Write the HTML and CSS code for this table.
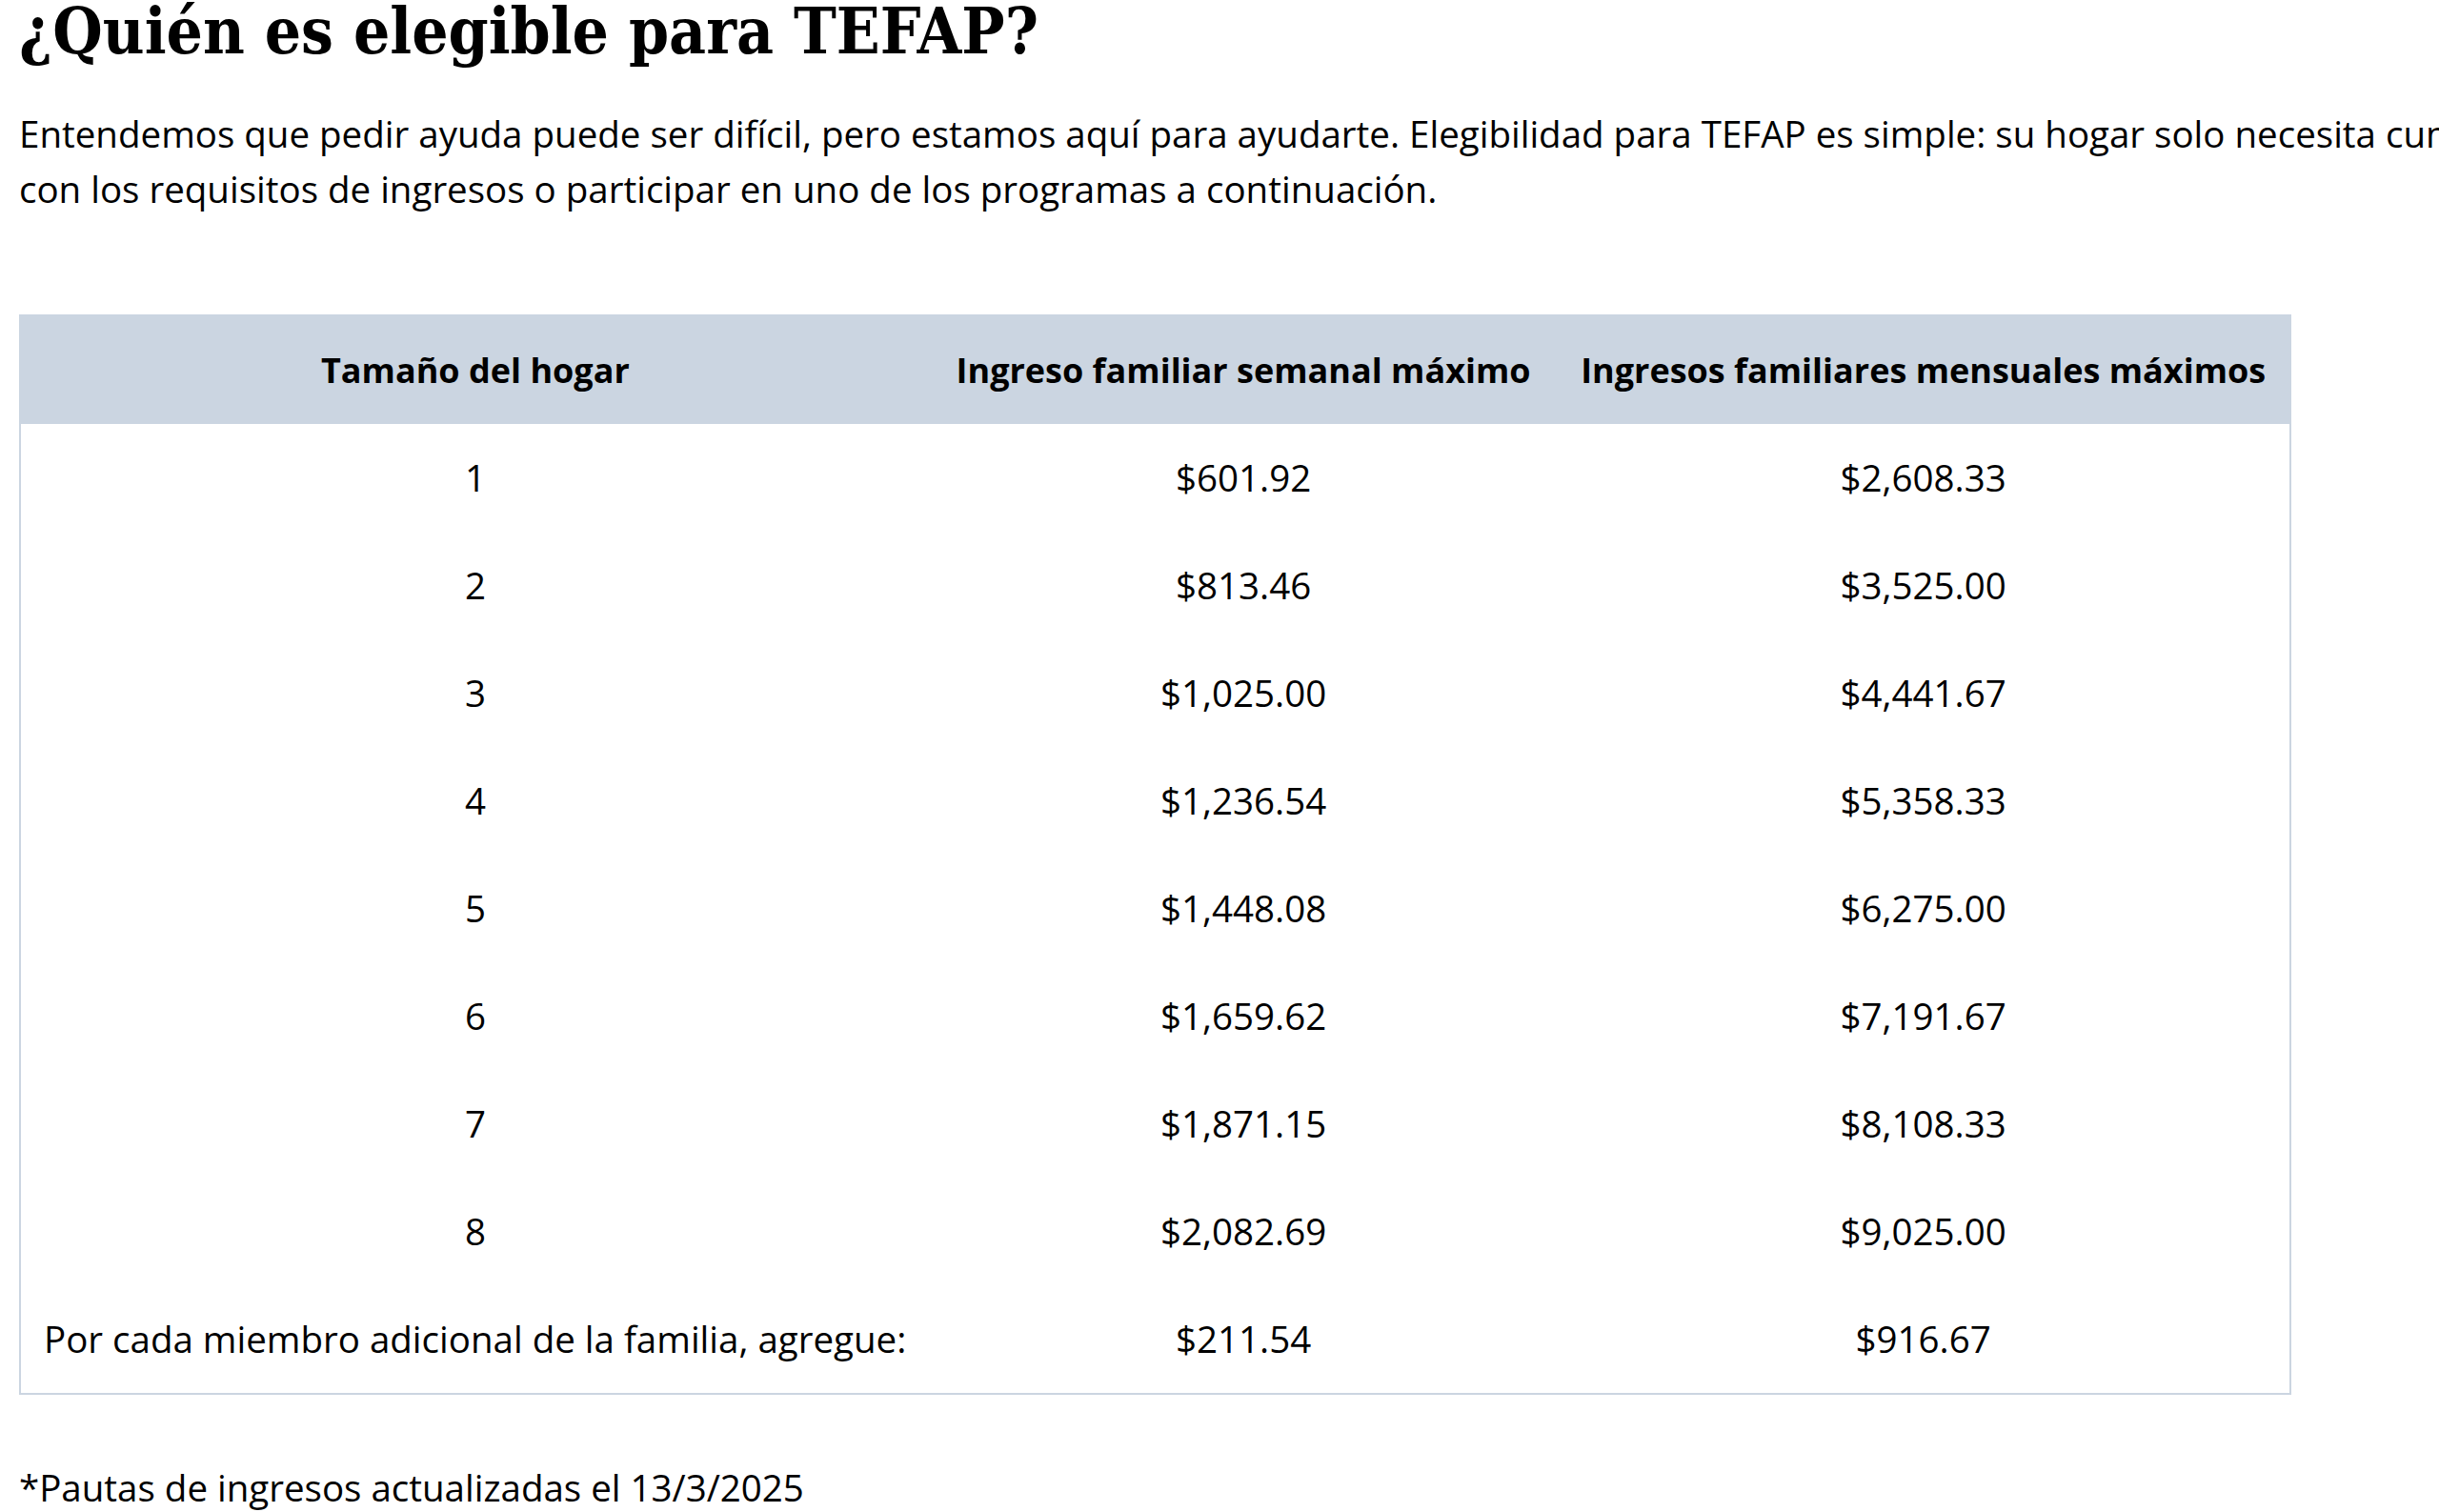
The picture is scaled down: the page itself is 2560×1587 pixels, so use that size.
FILE: index.html
```html
<!DOCTYPE html>
<html lang="es">
<head>
<meta charset="utf-8">
<title>¿Quién es elegible para TEFAP?</title>
<link rel="stylesheet" href="styles.css">
</head>
<body>
<main class="page">
  <h1 class="title">¿Quién es elegible para TEFAP?</h1>
  <p class="intro">Entendemos que pedir ayuda puede ser difícil, pero estamos aquí para ayudarte. Elegibilidad para TEFAP es simple: su hogar solo necesita cumplir con los requisitos de ingresos o participar en uno de los programas a continuación.</p>
  <table class="income">
    <colgroup>
      <col class="c1">
      <col class="c2">
      <col class="c3">
    </colgroup>
    <thead>
      <tr>
        <th>Tamaño del hogar</th>
        <th>Ingreso familiar semanal máximo</th>
        <th>Ingresos familiares mensuales máximos</th>
      </tr>
    </thead>
    <tbody>
      <tr><td>1</td><td>$601.92</td><td>$2,608.33</td></tr>
      <tr><td>2</td><td>$813.46</td><td>$3,525.00</td></tr>
      <tr><td>3</td><td>$1,025.00</td><td>$4,441.67</td></tr>
      <tr><td>4</td><td>$1,236.54</td><td>$5,358.33</td></tr>
      <tr><td>5</td><td>$1,448.08</td><td>$6,275.00</td></tr>
      <tr><td>6</td><td>$1,659.62</td><td>$7,191.67</td></tr>
      <tr><td>7</td><td>$1,871.15</td><td>$8,108.33</td></tr>
      <tr><td>8</td><td>$2,082.69</td><td>$9,025.00</td></tr>
      <tr><td class="left">Por cada miembro adicional de la familia, agregue:</td><td>$211.54</td><td>$916.67</td></tr>
    </tbody>
  </table>
  <p class="note">*Pautas de ingresos actualizadas el 13/3/2025</p>
</main>
</body>
</html>
```

FILE: styles.css
```css
html {
  overflow-x: hidden;
}

body {
  margin: 0;
  background: #ffffff;
  color: #000000;
  font-family: "Open Sans", "Noto Sans", sans-serif;
}

.page {
  padding-left: 20px;
}

.title {
  margin: 0;
  font-family: "DejaVu Serif Condensed", "DejaVu Serif", serif;
  font-weight: bold;
  font-size: 67px;
  line-height: 66px;
  white-space: nowrap;
}

.intro {
  margin: 45px 0 0;
  width: 2665px;
  font-size: 38.5px;
  line-height: 58px;
}

.income {
  margin-top: 103px;
  border-collapse: collapse;
  border: 2px solid #cbd5e1;
  table-layout: fixed;
  width: 2385px;
  font-size: 38.5px;
}

.c1 { width: 954px; }
.c2 { width: 658px; }
.c3 { width: 769px; }

.income th,
.income td {
  padding: 31px 24px;
  line-height: 51px;
  text-align: center;
  white-space: nowrap;
}

.income th {
  padding: 31px 16px;
  background: #cbd5e1;
  font-size: 36px;
  font-weight: bold;
}

.income td.left {
  text-align: left;
}

.note {
  margin: 68px 0 0;
  font-size: 38.5px;
  line-height: 58px;
}
```
